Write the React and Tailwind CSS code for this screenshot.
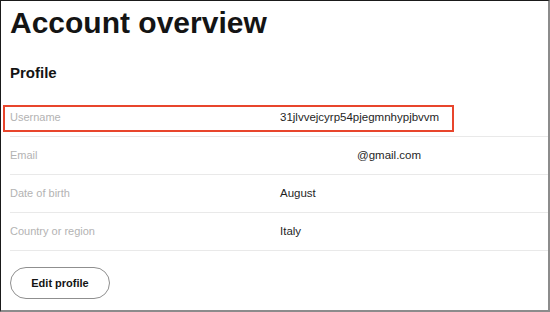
const rows = [
  { label: "Username", value: "31jlvvejcyrp54pjegmnhypjbvvm", highlight: true },
  { label: "Email", value: "@gmail.com", indent: true },
  { label: "Date of birth", value: "August" },
  { label: "Country or region", value: "Italy" },
];

function ProfileRow({ label, value, highlight, indent }) {
  return (
    <div className="relative flex items-center h-[38px] border-b-[1.5px] border-[#e9e9e9]">
      {highlight && (
        <div className="absolute left-[-7px] top-[6px] w-[451px] h-[27px] border-2 border-[#e8452c]"></div>
      )}
      <span className="w-[270px] shrink-0 text-[11px] text-[#b3b3b3]">{label}</span>
      <span className={`text-[11.5px] text-[#1f1f1f] ${indent ? "pl-[77px]" : ""}`}>
        {value}
      </span>
    </div>
  );
}

export default function App() {
  return (
    <div
      className="w-[550px] h-[312px] bg-white border-l border-t border-l-[#1a1a1a] border-t-[#1a1a1a] border-r-2 border-b-2 border-r-[#8c8c8c] border-b-[#8c8c8c] pl-[9px] overflow-hidden"
      style={{ fontFamily: '"Liberation Sans", Arial, sans-serif' }}
    >
      <h1 className="mt-[7px] text-[30px] leading-[30px] font-bold text-[#141414]">
        Account overview
      </h1>
      <h2 className="mt-[27px] text-[15px] leading-[15px] font-bold text-[#141414]">
        Profile
      </h2>

      <div className="mt-[19px]">
        {rows.map((r) => (
          <ProfileRow key={r.label} {...r} />
        ))}
      </div>

      <button className="mt-[16px] w-[100px] h-[32px] rounded-full border border-[#8f8f8f] text-[11px] font-bold text-[#141414]">
        Edit profile
      </button>
    </div>
  );
}
